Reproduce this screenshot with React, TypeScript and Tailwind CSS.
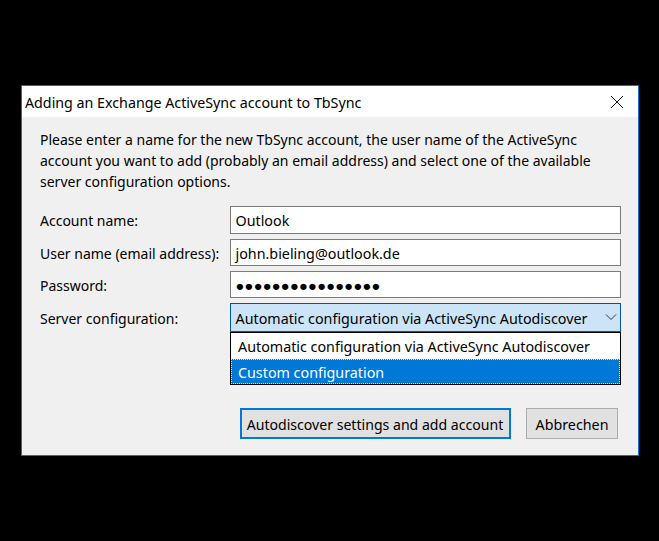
const FONT = "font-['Noto_Sans',sans-serif]"

function TextBox({ value, className }: { value: string; className: string }) {
  return (
    <div className={`flex items-center border border-[#7a7a7a] bg-white pl-[4.5px] pt-[2px] text-black ${className}`}>
      {value}
    </div>
  )
}

function Label({ children }: { children: string }) {
  return <div className="flex items-center pt-[1px] text-[14px] text-black">{children}</div>
}

function ConfigSelect() {
  return (
    <div className="relative">
      <div className="flex h-[29px] items-center justify-between border border-[#00569f] bg-[#cce4f7] pl-[4.5px] pr-[3px] pt-[2px] text-[14.3px] text-black">
        <span>Automatic configuration via ActiveSync Autodiscover</span>
        <svg className="mb-[3px]" width="12" height="8" viewBox="0 0 12 8" fill="none" stroke="#333" strokeWidth="1">
          <path d="M1 1.5 L6 6.5 L11 1.5" />
        </svg>
      </div>
      <div className="absolute left-0 right-0 top-[29px] z-10 border border-black bg-white text-[14.3px]">
        <div className="flex h-[26px] items-center pl-[7px] pt-[2px] text-black">Automatic configuration via ActiveSync Autodiscover</div>
        <div className="flex h-[25px] items-center border border-dotted border-[#cfe4f7] bg-[#0078d7] pl-[6px] pt-[2px] text-white">Custom configuration</div>
      </div>
    </div>
  )
}

export default function App() {
  return (
    <div className={`h-[541px] w-[659px] overflow-hidden bg-black pl-[21px] pt-[85px] ${FONT}`}>
      <div className="flex h-[371px] w-[618px] flex-col border border-[#0078d7] bg-[#f0f0f0]">
        <div className="flex h-[31px] shrink-0 items-center justify-between bg-white pl-[3px] pr-[14px] text-[14.25px] text-black">
          <span className="pt-[2px]">Adding an Exchange ActiveSync account to TbSync</span>
          <svg width="14" height="14" viewBox="0 0 14 14" fill="none" stroke="#111" strokeWidth="1">
            <path d="M1 1 L13 13 M13 1 L1 13" />
          </svg>
        </div>
        <div className="flex flex-1 flex-col pl-[18px] pr-[17px]">
          <p className="mt-[12px] text-[14px] leading-[21px] text-black">
            Please enter a name for the new TbSync account, the user name of the ActiveSync
            <br />
            account you want to add (probably an email address) and select one of the available
            <br />
            server configuration options.
          </p>
          <div className="mt-[14px] grid grid-cols-[190px_1fr] gap-y-[5px]">
            <Label>Account name:</Label>
            <TextBox value="Outlook" className="h-[28px] text-[14.3px]" />
            <Label>User name (email address):</Label>
            <TextBox value="john.bieling@outlook.de" className="h-[27px] text-[14.3px]" />
            <Label>Password:</Label>
            <TextBox value="●●●●●●●●●●●●●●●●" className="h-[27px] text-[14.7px] tracking-[0.2px]" />
            <Label>Server configuration:</Label>
            <ConfigSelect />
          </div>
          <div className="mt-[76px] flex justify-end gap-[15px] pr-[3px]">
            <button className="h-[31px] w-[271px] border-2 border-[#0078d7] bg-[#e1e1e1] pt-[2px] pr-[1px] text-[14.1px] text-black">
              Autodiscover settings and add account
            </button>
            <button className="h-[31px] w-[92px] border border-[#adadad] bg-[#e1e1e1] pt-[2px] text-[14.3px] text-black">
              Abbrechen
            </button>
          </div>
        </div>
      </div>
    </div>
  )
}
